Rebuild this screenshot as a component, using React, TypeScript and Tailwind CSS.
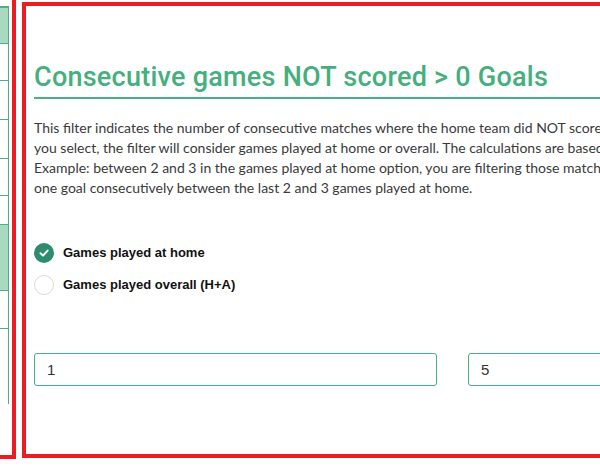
import React, { useState } from 'react';

const rows = [
  { h: 'h-[38px]', shade: true, head: true },
  { h: 'h-[37px]' },
  { h: 'h-[39px]' },
  { h: 'h-[39px]' },
  { h: 'h-[37px]' },
  { h: 'h-[29px]' },
  { h: 'h-[66px]', shade: true },
  { h: 'h-[38px]' },
];

const intro = [
  'This filter indicates the number of consecutive matches where the home team did NOT score at least one goal. Depending on the option',
  'you select, the filter will consider games played at home or overall. The calculations are based on the last games played.',
  'Example: between 2 and 3 in the games played at home option, you are filtering those matches where the home team did NOT score at least',
  'one goal consecutively between the last 2 and 3 games played at home.',
];

function SideTable() {
  return (
    <div className="w-[16px] h-[459px] shrink-0 border-r-4 border-b-4 border-[#ed1c24] overflow-hidden">
      <div className="pt-[6px] w-[9px]">
        <div className="border-r border-[#4caf85]">
          {rows.map((r, i) => (
            <div
              key={i}
              className={`${r.h} border-b border-[#4caf85] ${r.shade ? 'bg-[#a9d9c1]' : ''} ${r.head ? 'border-t-2' : ''}`}
            />
          ))}
          <div className="h-[75px]" />
        </div>
      </div>
    </div>
  );
}

function Radio({ checked, label, onClick }: { checked: boolean; label: string; onClick: () => void }) {
  return (
    <button type="button" onClick={onClick} className="flex items-center gap-[9px] text-left">
      {checked ? (
        <span className="w-[20px] h-[20px] rounded-full bg-[#2e8b6f] flex items-center justify-center">
          <svg width="12" height="12" viewBox="0 0 12 12" fill="none">
            <path d="M2.5 6.2 L5 8.6 L9.6 3.6" stroke="white" strokeWidth="2" strokeLinecap="round" strokeLinejoin="round" />
          </svg>
        </span>
      ) : (
        <span className="w-[20px] h-[20px] rounded-full border border-[#d9d9d4] bg-white" />
      )}
      <span className="text-[13px] font-bold text-[#111] font-['Liberation_Sans',Arial,sans-serif]">{label}</span>
    </button>
  );
}

export default function App() {
  const [mode, setMode] = useState<'home' | 'overall'>('home');
  const [min, setMin] = useState('1');
  const [max, setMax] = useState('5');

  return (
    <div className="w-[600px] h-[467px] overflow-hidden bg-white flex gap-[6px] font-['Lato','Liberation_Sans',sans-serif]">
      <SideTable />

      <div className="mt-[2px] h-[456px] w-[900px] shrink-0 border-4 border-[#ed1c24] pl-[8px] pr-[8px]">
        <h2 className="mt-[54px] pb-[3px] border-b-2 border-[#4caf85] text-[27px] font-medium tracking-[0.25px] text-[#45af7e] leading-[34px] font-['Roboto',sans-serif]">
          Consecutive games NOT scored &gt; 0 Goals
        </h2>

        <div className="mt-[19px] text-[14px] leading-[20px] text-[#3a3a3a]">
          {intro.map((line) => (
            <p key={line} className="whitespace-nowrap">{line}</p>
          ))}
        </div>

        <div className="mt-[45px] flex flex-col gap-[12px]">
          <Radio checked={mode === 'home'} label="Games played at home" onClick={() => setMode('home')} />
          <Radio checked={mode === 'overall'} label="Games played overall (H+A)" onClick={() => setMode('overall')} />
        </div>

        <div className="mt-[58px] flex gap-[31px]">
          <input
            value={min}
            onChange={(e) => setMin(e.target.value)}
            className="w-[403px] h-[33px] border border-[#4caf85] rounded-[3px] px-[12px] text-[15px] text-[#333] outline-none font-['Liberation_Sans',Arial,sans-serif]"
          />
          <input
            value={max}
            onChange={(e) => setMax(e.target.value)}
            className="w-[403px] h-[33px] border border-[#4caf85] rounded-[3px] px-[12px] text-[15px] text-[#333] outline-none font-['Liberation_Sans',Arial,sans-serif]"
          />
        </div>
      </div>
    </div>
  );
}
